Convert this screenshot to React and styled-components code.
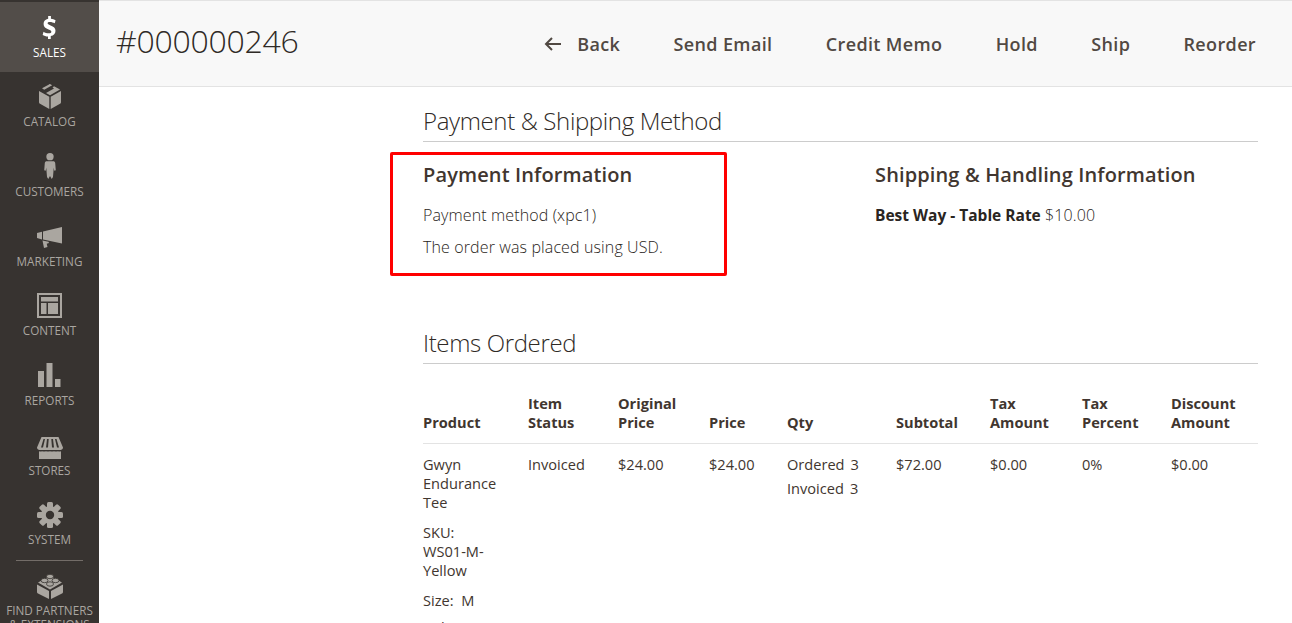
import React from 'react';
import styled, { createGlobalStyle } from 'styled-components';

const Global = createGlobalStyle`
  html, body { margin: 0; padding: 0; height: 100%; overflow: hidden; background: #fff; }
  body { font-family: "Open Sans", "Liberation Sans", sans-serif; color: #41362f; }
  * { box-sizing: border-box; }
`;

const Page = styled.div`
  display: flex;
  width: 1292px;
  height: 623px;
  overflow: hidden;
`;

const Sidebar = styled.nav`
  flex: 0 0 99px;
  height: 623px;
  overflow: hidden;
  background: #373330;
  padding-top: 2px;
`;

const NavItem = styled.div`
  height: ${p => p.$h || 69.7}px;
  display: flex;
  flex-direction: column;
  align-items: center;
  padding-top: ${p => p.$top || 10}px;
  background: ${p => (p.$active ? '#524d49' : 'transparent')};
  color: ${p => (p.$active ? '#ffffff' : '#aaa6a0')};
  font-size: 11.7px;
  line-height: 14px;
  text-align: center;
  white-space: nowrap;
`;

const IconBox = styled.div`
  height: 30px;
  width: 40px;
  padding-top: ${p => (p.$shift || 0) * 2}px;
  display: flex;
  align-items: center;
  justify-content: center;
  margin-bottom: 2.5px;
  svg { display: block; }
`;

const NavDivider = styled.div`
  width: 67px;
  height: 1px;
  margin: 0 auto;
  background: #736d68;
`;

const Main = styled.main`
  flex: 1;
  min-width: 0;
`;

const Header = styled.header`
  height: 87px;
  display: flex;
  align-items: center;
  justify-content: space-between;
  padding: 0 36px 2px 17px;
  background: #f8f8f8;
  border-top: 1px solid #e3e3e3;
  border-bottom: 1px solid #e3e3e3;
`;

const Title = styled.h1`
  margin: 0 0 4px;
  font-size: 32px;
  line-height: 40px;
  font-weight: 300;
  letter-spacing: -0.25px;
  color: #2f2a26;
`;

const Actions = styled.div`
  display: flex;
  align-items: center;
  gap: 53.3px;
  padding-top: 3px;
`;

const Action = styled.span`
  display: flex;
  align-items: center;
  gap: 16px;
  font-size: 18px;
  line-height: 24px;
  font-weight: 600;
  color: #514943;
  letter-spacing: 0.36px;
`;

const Content = styled.div`
  margin-left: 324px;
  width: 835px;
  padding-top: 18px;
`;

const SectionTitle = styled.div`
  height: 37px;
  border-bottom: 1px solid #cccccc;
  font-size: 24px;
  line-height: 32px;
  font-weight: 300;
  letter-spacing: -0.36px;
  color: #2f2a26;
`;

const InfoRow = styled.div`
  display: flex;
`;

const InfoColumn = styled.section`
  flex: 0 0 ${p => p.$w}px;
  padding-top: 19px;
  position: relative;
`;

const Highlight = styled.div`
  position: absolute;
  left: -33px;
  top: 10px;
  width: 337px;
  height: 124px;
  border: 3px solid #ff0000;
  border-radius: 2px;
  pointer-events: none;
`;

const InfoTitle = styled.h3`
  margin: 0 0 18px;
  font-size: 20px;
  line-height: 27px;
  font-weight: 600;
  letter-spacing: 0.13px;
  color: #41362f;
`;

const InfoLine = styled.p`
  margin: 0 0 13px;
  font-size: 16px;
  line-height: 19px;
  font-weight: 300;
  letter-spacing: 0.12px;
  color: #2a2521;
`;

const Strong = styled.strong`
  font-weight: 700;
  font-size: 15.5px;
  letter-spacing: 0;
`;

const ItemsBlock = styled.div`
  margin-top: 57px;
`;

const Table = styled.table`
  width: 835px;
  margin-top: 22px;
  border-collapse: collapse;
  table-layout: fixed;
  font-size: 14.6px;
  line-height: 19px;
`;

const Th = styled.th`
  width: ${p => p.$w}px;
  padding: 8px 10px 11px 0;
  vertical-align: bottom;
  text-align: left;
  font-weight: 700;
  color: #41362f;
  border-bottom: 1px solid #e3e3e3;
`;

const Td = styled.td`
  padding: 11px 10px 0 0;
  vertical-align: top;
  color: #41362f;
`;

const CellBlock = styled.div`
  margin-bottom: ${p => p.$mb ?? 11}px;
`;

const QtyLine = styled.div`
  display: flex;
  gap: 6px;
  margin-bottom: 5px;
`;

const Dollar = () => (
  <svg width="15" height="23" viewBox="0 0 18 26" preserveAspectRatio="none">
    <path fill="#fff" d="M7.400 0h3.300v3c2.200.2 4 .8 5.600 1.700l-1 3.600c-1.800-1-3.700-1.600-5.800-1.600-1.800 0-2.800.6-2.800 1.500 0 1 1 1.500 3.600 2.400 3.800 1.200 5.900 2.800 5.900 6 0 3.200-2.200 5.500-5.700 6.100V26H7.200v-2.700c-2.500-.2-4.800-.9-6.400-1.900l1-3.700c1.800 1.100 4.100 1.900 6.300 1.900 2 0 3.100-.7 3.100-1.800 0-1.100-1-1.700-3.300-2.500C4.400 14 1.900 12.500 1.900 9.100c0-3 2-5.300 5.500-5.900z" />
  </svg>
);

const Box = () => (
  <svg width="22" height="25" viewBox="0 0 22 25" fill="#aaa6a0">
    <path d="M0 7 10.300 12.700V25L1 19.800C.4 19.500 0 19 0 18.200z" />
    <path d="M22 7 11.700 12.700V25L21 19.800c.6-.3 1-.8 1-1.600z" />
    <path d="M11 0 13.200 1.200 5.200 5.700 3 4.300 10 .4C10.400.2 10.700 0 11 0z" />
    <path d="M15 2.200 21 5.600 11 11.300 7 9 15 4.500 13.500 3.400z" />
  </svg>
);

const Person = () => (
  <svg width="12" height="26" viewBox="0 0 12 27" fill="#aaa6a0">
    <circle cx="6" cy="3.800" r="3.800" />
    <path d="M2.600 8.500h6.800c1.100 0 1.800.7 2 1.800l.6 7.700-1.500.5-.6-3.300-.8 9.800-1.300 2-1.800-3-1.800 3-1.300-2-.8-9.800-.6 3.300-1.500-.5.600-7.700c.2-1.100.9-1.800 2-1.800z" />
  </svg>
);

const Megaphone = () => (
  <svg width="25" height="21" viewBox="0 0 25 21" fill="#aaa6a0">
    <path d="M0 6 5 4.800v7.700L0 11z" />
    <path d="M6 4.500 25 0v16.500L6 12.500z" />
    <path d="M5.500 13.500 11.500 14.700 12 16l-2.300.8.800 3.200-3.500 1z" />
  </svg>
);

const ContentIcon = () => (
  <svg width="25" height="25" viewBox="0 0 25 25" fill="#aaa6a0">
    <path fillRule="evenodd" d="M0 0h25v25H0zM2 2v21h21V2z" />
    <path d="M4 4h17v4.500H4zM4 10h5.500v11H4zM11 10h10v11H11z" />
  </svg>
);

const Bars = () => (
  <svg width="23" height="24" viewBox="0 0 23 24" fill="#aaa6a0">
    <path d="M0 8h6v16H0zM8.500 0h6v24h-6zM17 16h5.500v8H17z" />
  </svg>
);

const Store = () => (
  <svg width="26" height="22" viewBox="0 0 26 22" fill="#aaa6a0">
    <path fillRule="evenodd" d="M4.500 0h17L26 10.500c0 1.400-1.200 2.500-2.600 2.500H2.600C1.200 13 0 11.900 0 10.500zM6.500 2 4 10.500h2L8 2zM10 2l-1 8.500h2L11.700 2zM14.300 2l.7 8.500h2L16 2zM18 2l2 8.500h2L19.500 2z" />
    <path d="M2 14.200c1 .3 2.200.3 3 0 1.400.5 2.700.5 4 0 1.300.5 2.700.5 4 0 1.300.5 2.700.5 4 0 1.300.5 2.700.5 4 0 .9.300 2 .3 3 0V22H2z" />
  </svg>
);

const Gear = () => {
  const teeth = [0, 45, 90, 135];
  return (
    <svg width="26" height="26" viewBox="0 0 26 26">
      {teeth.map(a => (
        <rect key={a} x="10" y="0" width="6" height="26" rx="1.500" fill="#aaa6a0" transform={`rotate(${a} 13 13)`} />
      ))}
      <circle cx="13" cy="13" r="9" fill="#aaa6a0" />
      <circle cx="13" cy="13" r="4.200" fill="#373330" />
    </svg>
  );
};

const Brick = () => (
  <svg width="26" height="26" viewBox="0 0 26 26" fill="#aaa6a0">
    <path d="M0 11.500 12 18v8L1 20.500c-.6-.3-1-.9-1-1.600z" />
    <path d="M26 11.500 14 18v8l11-5.500c.6-.3 1-.9 1-1.600z" />
    <path d="M13 3 25 9.500 13 16.500 1 9.500z" />
    <g stroke="#373330" strokeWidth="0.800">
      <ellipse cx="13" cy="3.500" rx="3.500" ry="2.200" />
      <ellipse cx="7.500" cy="7.500" rx="3.500" ry="2.200" />
      <ellipse cx="18.500" cy="7.500" rx="3.500" ry="2.200" />
      <ellipse cx="13" cy="11" rx="3.500" ry="2.200" />
    </g>
  </svg>
);

const BackArrow = () => (
  <svg width="17" height="14" viewBox="0 0 17 14" fill="none" stroke="#514943" strokeWidth="2">
    <path d="M8 1 2 7l6 6M2 7h15" />
  </svg>
);

const navItems = [
  { label: 'SALES', icon: <Dollar />, active: true },
  { label: 'CATALOG', icon: <Box /> },
  { label: 'CUSTOMERS', icon: <Person /> },
  { label: 'MARKETING', icon: <Megaphone />, shift: 1 },
  { label: 'CONTENT', icon: <ContentIcon /> },
  { label: 'REPORTS', icon: <Bars /> },
  { label: 'STORES', icon: <Store />, shift: 3 },
  { label: 'SYSTEM', icon: <Gear /> },
];

const columns = [
  ['Product', 105],
  ['Item Status', 90],
  ['Original Price', 91],
  ['Price', 78],
  ['Qty', 109],
  ['Subtotal', 94],
  ['Tax Amount', 92],
  ['Tax Percent', 89],
  ['Discount Amount', 87],
];

export default function App() {
  return (
    <Page>
      <Global />
      <Sidebar>
        {navItems.map(item => (
          <NavItem key={item.label} $active={item.active}>
            <IconBox $shift={item.shift}>{item.icon}</IconBox>
            {item.label}
          </NavItem>
        ))}
        <NavDivider />
        <NavItem $h={80} $top={10}>
          <IconBox>
            <Brick />
          </IconBox>
          FIND PARTNERS
          <br />
          &amp; EXTENSIONS
        </NavItem>
      </Sidebar>
      <Main>
        <Header>
          <Title>#000000246</Title>
          <Actions>
            <Action>
              <BackArrow />
              Back
            </Action>
            <Action>Send Email</Action>
            <Action>Credit Memo</Action>
            <Action>Hold</Action>
            <Action>Ship</Action>
            <Action>Reorder</Action>
          </Actions>
        </Header>
        <Content>
          <SectionTitle>Payment &amp; Shipping Method</SectionTitle>
          <InfoRow>
            <InfoColumn $w={452}>
              <Highlight />
              <InfoTitle>Payment Information</InfoTitle>
              <InfoLine>Payment method (xpc1)</InfoLine>
              <InfoLine>The order was placed using USD.</InfoLine>
            </InfoColumn>
            <InfoColumn $w={383}>
              <InfoTitle>Shipping &amp; Handling Information</InfoTitle>
              <InfoLine>
                <Strong>Best Way - Table Rate</Strong> $10.00
              </InfoLine>
            </InfoColumn>
          </InfoRow>
          <ItemsBlock>
            <SectionTitle>Items Ordered</SectionTitle>
            <Table>
              <thead>
                <tr>
                  {columns.map(([name, w]) => (
                    <Th key={name} $w={w}>
                      {name}
                    </Th>
                  ))}
                </tr>
              </thead>
              <tbody>
                <tr>
                  <Td>
                    <CellBlock>Gwyn Endurance Tee</CellBlock>
                    <CellBlock>SKU:<br />WS01-M-Yellow</CellBlock>
                    <CellBlock $mb={8}>Size:&nbsp; M</CellBlock>
                    <CellBlock>Color:<br />Yellow</CellBlock>
                  </Td>
                  <Td>Invoiced</Td>
                  <Td>$24.00</Td>
                  <Td>$24.00</Td>
                  <Td>
                    <QtyLine>
                      <span>Ordered</span>
                      <span>3</span>
                    </QtyLine>
                    <QtyLine>
                      <span>Invoiced</span>
                      <span>3</span>
                    </QtyLine>
                  </Td>
                  <Td>$72.00</Td>
                  <Td>$0.00</Td>
                  <Td>0%</Td>
                  <Td>$0.00</Td>
                </tr>
              </tbody>
            </Table>
          </ItemsBlock>
        </Content>
      </Main>
    </Page>
  );
}
